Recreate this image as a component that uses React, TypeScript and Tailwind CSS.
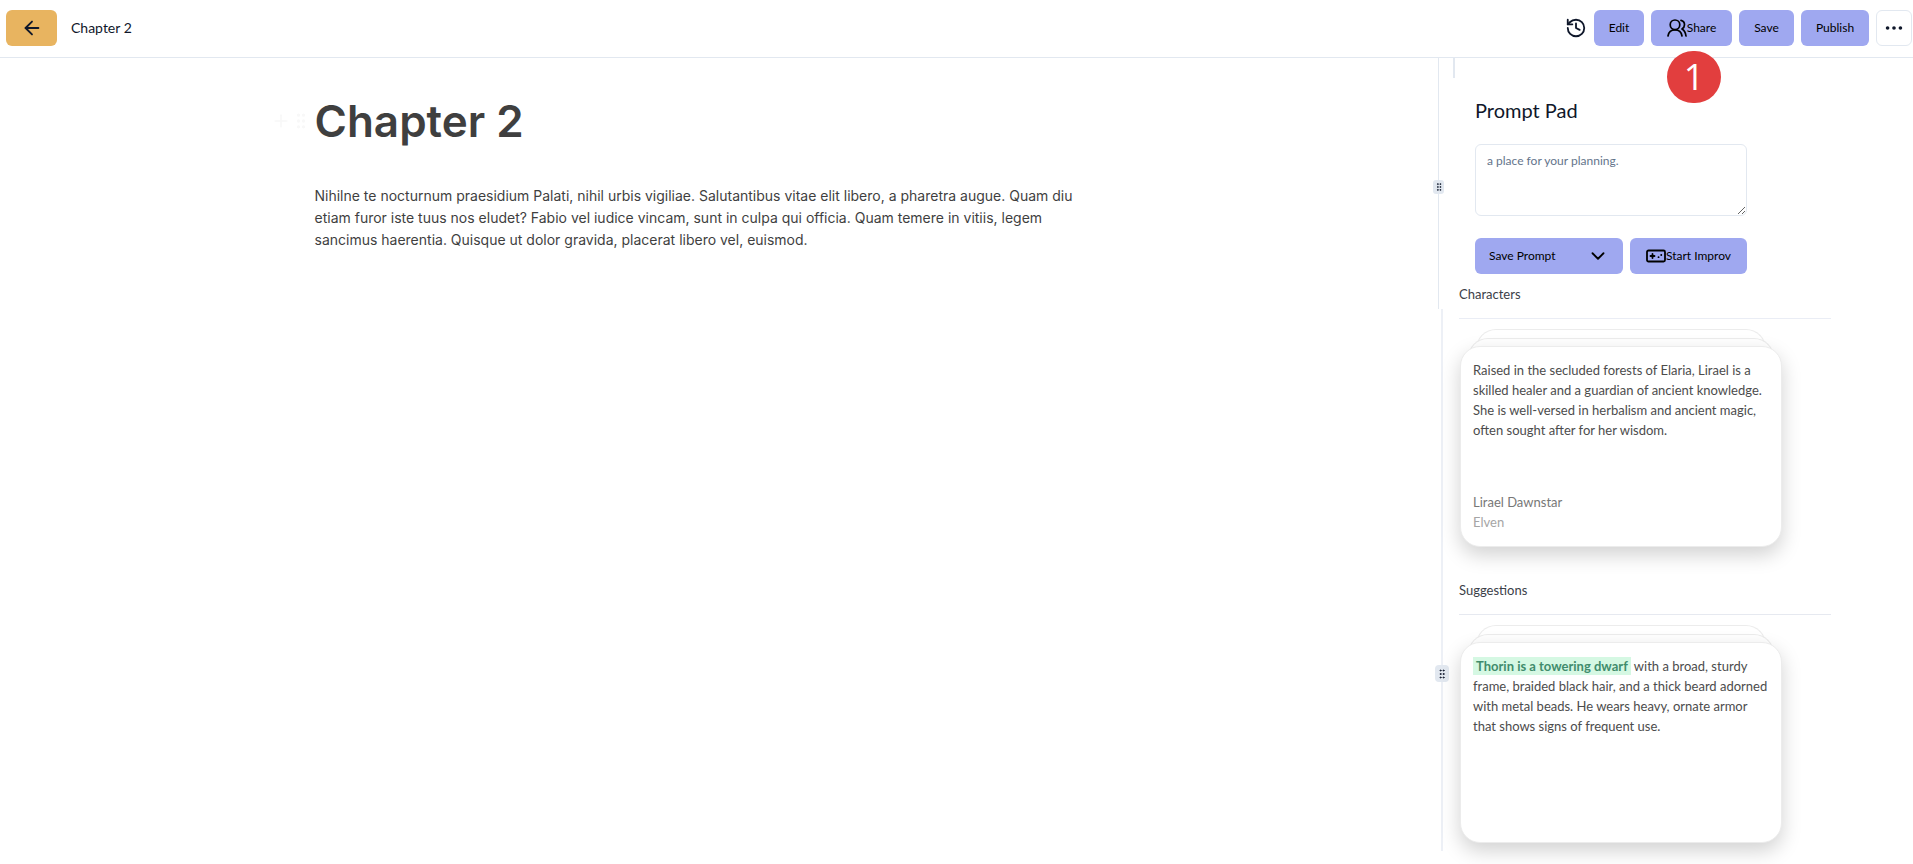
import { useState } from 'react'
import { ArrowLeft, ChevronDown, GripVertical, History, MoreHorizontal, Plus } from 'lucide-react'

const primaryButton =
  'flex h-9 items-center rounded-md bg-[#9fa8f0] text-xs text-black hover:bg-[#8f99ec]'

function ShareIcon() {
  return (
    <svg viewBox="0 0 20 20" className="h-5 w-5" fill="none" stroke="currentColor" strokeWidth="1.7" strokeLinecap="round" strokeLinejoin="round">
      <circle cx="8" cy="6.8" r="4.8" />
      <path d="M1 18c.6-3.8 3.2-6.2 7-6.2s6.400 2.400 7 6.200" />
      <path d="M14 2.400c2.300.5 3.500 2.200 3.500 4.400 0 1.800-.9 3.200-2.500 4.200 2.200 1.200 3.600 3.600 4 7" />
    </svg>
  )
}

function ImprovIcon() {
  return (
    <svg viewBox="0 0 20 20" className="h-5 w-5" fill="none" stroke="currentColor" strokeWidth="1.8" strokeLinecap="round" strokeLinejoin="round">
      <rect x="1" y="4.5" width="18" height="11" rx="1.5" />
      <path d="M4.500 10h4M6.500 8v4" />
      <path d="M12.500 11.200h.1M15.200 9h.1" />
    </svg>
  )
}

function CardStack({ children }: { children: React.ReactNode }) {
  return (
    <div className="ml-px w-[322px]">
      {/* Cards peeking out from behind */}
      <div className="mx-4 -mb-[31px] h-10 rounded-t-[20px] border border-b-0 border-[#ececec] bg-white" />
      <div className="mx-2 -mb-8 h-10 rounded-t-[20px] border border-b-0 border-[#ececec] bg-white" />
      <div className="flex h-[201px] flex-col justify-between rounded-[20px] border border-[#ececec] bg-white pt-[13px] pr-2 pb-[14px] pl-3 text-[13px] leading-5 text-[#4c4c4c] shadow-[0_8px_20px_rgba(0,0,0,0.18)]">
        {children}
      </div>
    </div>
  )
}

function Divider() {
  return (
    <div className="flex w-5 shrink-0 flex-col">
      <div className="flex h-[251px] w-[11px] flex-col items-center">
        <div className="h-[122px] w-px bg-[#e2e8f0]" />
        <div className="flex h-[14px] w-[11px] items-center justify-center rounded-[3px] bg-[#e2e8f0]">
          <GripVertical className="h-[10px] w-[10px] text-[#0f172a]" />
        </div>
        <div className="w-px flex-1 bg-[#e2e8f0]" />
      </div>
      <div className="ml-[2px] flex h-[542px] w-[14px] flex-col items-center">
        <div className="h-[356px] w-[2px] bg-[#edf0f6]" />
        <div className="flex h-[17px] w-[14px] items-center justify-center rounded-[4px] bg-[#e2e8f0]">
          <GripVertical className="h-3 w-3 text-[#0f172a]" />
        </div>
        <div className="w-[2px] flex-1 bg-[#edf0f6]" />
      </div>
    </div>
  )
}

function App() {
  const [prompt, setPrompt] = useState('')

  return (
    <div className="min-h-screen bg-white font-[Lato,sans-serif] text-[#0f172a]">
      {/* Header */}
      <header className="flex h-[58px] items-center justify-between border-b border-[#e2e8f0] pr-px pb-px pl-[6px]">
        <div className="flex items-center gap-[14px]">
          <button aria-label="Back" className="flex h-9 w-[51px] items-center justify-center rounded-md bg-[#e8b460]">
            <ArrowLeft className="h-[22px] w-[22px]" />
          </button>
          <span className="text-sm">Chapter 2</span>
        </div>

        <div className="flex items-center gap-[7px]">
          <button aria-label="History" className="flex h-9 items-center justify-center">
            <History className="h-[22px] w-[22px]" />
          </button>
          <button className={`${primaryButton} w-[50px] justify-center`}>Edit</button>
          <div className="relative">
            <button className={`${primaryButton} w-[81px] justify-center`}>
              <ShareIcon />
              Share
            </button>
            <span className="absolute top-[41px] left-4 flex h-[52px] w-[54px] items-center justify-center rounded-full bg-[#e23e3e] font-['Open_Sans',sans-serif] text-4xl text-white">
              1
            </span>
          </div>
          <button className={`${primaryButton} w-[55px] justify-center`}>Save</button>
          <button className={`${primaryButton} w-[68px] justify-center`}>Publish</button>
          <button aria-label="More" className="flex h-9 w-9 items-center justify-center rounded-md border border-[#e2e8f0]">
            <MoreHorizontal className="h-[22px] w-[22px]" />
          </button>
        </div>
      </header>

      <div className="flex">
        {/* Editor */}
        <main className="flex flex-1 justify-center pt-[33px] font-[Inter,sans-serif] text-[#3f3f3f]">
          <div className="w-[804px]">
            <div className="-ml-11 flex items-center">
              <Plus className="h-5 w-5 text-[#f8f8f8]" />
              <GripVertical className="mr-1 h-5 w-5 text-[#f8f8f8]" />
              <h1 className="text-[44px] leading-[60px] font-semibold">Chapter 2</h1>
            </div>
            <p className="mt-[34px] text-sm leading-[22px]">
              Nihilne te nocturnum praesidium Palati, nihil urbis vigiliae. Salutantibus vitae elit libero, a pharetra augue. Quam diu
              <br />
              etiam furor iste tuus nos eludet? Fabio vel iudice vincam, sunt in culpa qui officia. Quam temere in vitiis, legem
              <br />
              sancimus haerentia. Quisque ut dolor gravida, placerat libero vel, euismod.
            </p>
          </div>
        </main>

        <Divider />

        {/* Sidebar */}
        <aside className="w-[460px] shrink-0">
          <div className="h-5 w-[2px] bg-[#e2e8f0]" />
          <section className="ml-[22px] w-[272px] pt-4">
            <h2 className="text-xl leading-8">Prompt Pad</h2>
            <textarea
              aria-label="Prompt"
              value={prompt}
              onChange={(e) => setPrompt(e.target.value)}
              placeholder="a place for your planning."
              className="mt-[18px] block h-[72px] w-full rounded-md border border-[#e2e8f0] px-[11px] py-2 text-xs placeholder:text-[#64748b]"
            />
            <div className="mt-[22px] flex gap-[7px]">
              <button className={`${primaryButton} w-[148px] justify-between px-[14px]`}>
                Save Prompt
                <ChevronDown className="h-[22px] w-[22px]" />
              </button>
              <button className={`${primaryButton} flex-1 justify-center`}>
                <ImprovIcon />
                Start Improv
              </button>
            </div>
          </section>

          <section className="ml-[6px]">
            <h3 className="mt-[10px] mr-[82px] mb-[10px] border-b border-[#eaedf5] pb-[14px] text-[13px] leading-5 text-[#3b4048]">Characters</h3>
            <CardStack>
              <p>
                Raised in the secluded forests of Elaria, Lirael is a
                <br />
                skilled healer and a guardian of ancient knowledge.
                <br />
                She is well-versed in herbalism and ancient magic,
                <br />
                often sought after for her wisdom.
              </p>
              <div>
                <p className="text-[#777777]">Lirael Dawnstar</p>
                <p className="text-[#a5a5a5]">Elven</p>
              </div>
            </CardStack>
          </section>

          <section className="ml-[6px]">
            <h3 className="mt-[33px] mr-[82px] mb-[10px] border-b border-[#e6e9f0] pb-[14px] text-[13px] leading-5 text-[#3b4048]">Suggestions</h3>
            <CardStack>
              <p>
                <mark className="bg-[#d5f8e3] px-[3px] py-px font-bold text-[#418c6c]">Thorin is a towering dwarf</mark> with a broad, sturdy
                <br />
                frame, braided black hair, and a thick beard adorned
                <br />
                with metal beads. He wears heavy, ornate armor
                <br />
                that shows signs of frequent use.
              </p>
            </CardStack>
          </section>
        </aside>
      </div>
    </div>
  )
}

export default App
